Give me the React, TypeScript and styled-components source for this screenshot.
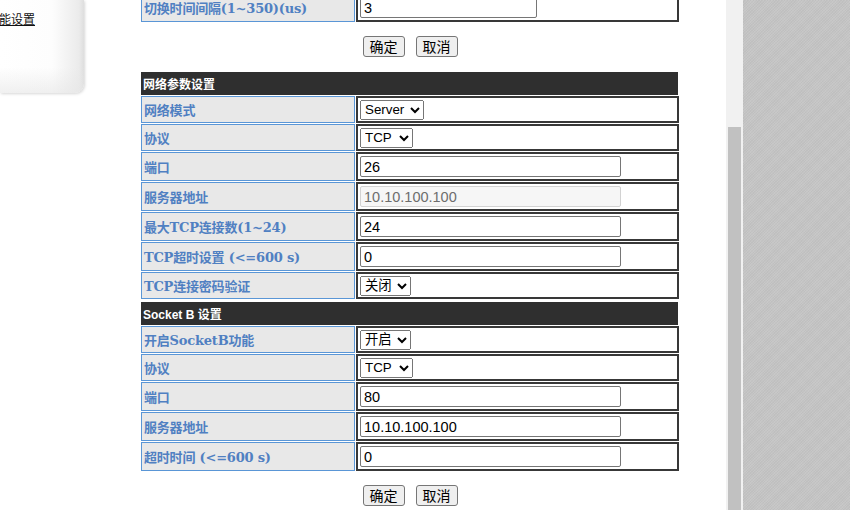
import styled, { createGlobalStyle } from 'styled-components'

type Field = {
  label: string
  kind: 'select' | 'input'
  value: string
  options?: string[]
  width?: number
  disabled?: boolean
}

const switchRow: Field[] = [{ label: '切换时间间隔(1~350)(us)', kind: 'input', value: '3', width: 177 }]

const networkRows: Field[] = [
  { label: '网络模式', kind: 'select', value: 'Server', options: ['Server', 'Client'], width: 64 },
  { label: '协议', kind: 'select', value: 'TCP', options: ['TCP', 'UDP'], width: 53 },
  { label: '端口', kind: 'input', value: '26' },
  { label: '服务器地址', kind: 'input', value: '10.10.100.100', disabled: true },
  { label: '最大TCP连接数(1~24)', kind: 'input', value: '24' },
  { label: 'TCP超时设置 (<=600 s)', kind: 'input', value: '0' },
  { label: 'TCP连接密码验证', kind: 'select', value: '关闭', options: ['关闭', '开启'], width: 51 },
]

const socketBRows: Field[] = [
  { label: '开启SocketB功能', kind: 'select', value: '开启', options: ['开启', '关闭'], width: 51 },
  { label: '协议', kind: 'select', value: 'TCP', options: ['TCP', 'UDP'], width: 53 },
  { label: '端口', kind: 'input', value: '80' },
  { label: '服务器地址', kind: 'input', value: '10.10.100.100' },
  { label: '超时时间 (<=600 s)', kind: 'input', value: '0' },
]

function Rows({ rows }: { rows: Field[] }) {
  return (
    <>
      {rows.map((f, i) => {
        const tall = f.kind === 'input'
        return [
          <Label key={`l${i}`} $tall={tall}>
            {f.label}
          </Label>,
          <Value key={`v${i}`} $tall={tall}>
            {f.kind === 'select' ? (
              <Select defaultValue={f.value} $width={f.width ?? 60}>
                {f.options!.map(o => (
                  <option key={o}>{o}</option>
                ))}
              </Select>
            ) : (
              <TextInput defaultValue={f.value} disabled={f.disabled} $width={f.width ?? 261} />
            )}
          </Value>,
        ]
      })}
    </>
  )
}

function Buttons() {
  return (
    <ButtonBar>
      <Button>确定</Button>
      <Button>取消</Button>
    </ButtonBar>
  )
}

export default function App() {
  return (
    <>
      <GlobalStyle />
      <Shell>
        <Frame>
          <Sidebar>
            <NavLink href="#">能设置</NavLink>
          </Sidebar>
          <Content>
            <Scroller>
              <Section>
                <Rows rows={switchRow} />
              </Section>
              <Buttons />
              <Section>
                <SectionTitle>网络参数设置</SectionTitle>
                <Rows rows={networkRows} />
              </Section>
              <Section $gap>
                <SectionTitle>Socket B 设置</SectionTitle>
                <Rows rows={socketBRows} />
              </Section>
              <Buttons />
            </Scroller>
          </Content>
          <ScrollTrack>
            <ScrollThumb />
          </ScrollTrack>
        </Frame>
        <Backdrop />
      </Shell>
    </>
  )
}

// ----- STYLES -----

const GlobalStyle = createGlobalStyle`
  * { box-sizing: border-box; }
  html, body {
    margin: 0;
    width: 850px;
    height: 510px;
    overflow: hidden;
    background: #fff;
  }
`

const Shell = styled.div`
  display: flex;
  width: 850px;
  height: 510px;
`

const Frame = styled.div`
  display: flex;
  width: 743px;
  height: 100%;
  background: #fff;
  overflow: hidden;
`

const Sidebar = styled.div`
  width: 84px;
  height: 93px;
  flex-shrink: 0;
  padding-top: 10px;
  border-radius: 0 0 9px 0;
  background:
    linear-gradient(to bottom, rgba(255, 255, 255, 0) 72%, rgba(230, 230, 230, 0.6) 100%),
    linear-gradient(to right, #ffffff 0%, #fdfdfd 62%, #ebebeb 94%, #dedede 100%);
  box-shadow: 1px 1px 3px rgba(0, 0, 0, 0.16);
`

const NavLink = styled.a`
  display: inline-block;
  margin-left: -1px;
  font: 12px/16px 'Noto Sans CJK SC', sans-serif;
  color: #111;
  text-decoration: underline;
`

const Content = styled.div`
  flex: 1;
  padding-left: 56px;
  overflow: hidden;
`

const Scroller = styled.div`
  width: 540px;
  margin-top: -8px;
`

const Section = styled.div<{ $gap?: boolean }>`
  display: grid;
  grid-template-columns: 214px 323px;
  gap: 1px;
  padding: 1px;
  margin-top: ${({ $gap }) => ($gap ? '1px' : '0')};
`

const SectionTitle = styled.div`
  grid-column: 1 / -1;
  height: 23px;
  margin-right: 1px;
  padding: 0 2px;
  display: flex;
  align-items: center;
  background: #2f2f2f;
  color: #fff;
  font: bold 12px 'Liberation Sans', 'Noto Sans CJK SC', sans-serif;
`

const Label = styled.div<{ $tall: boolean }>`
  height: ${({ $tall }) => ($tall ? '29px' : '27px')};
  padding: 0 2px;
  display: flex;
  align-items: center;
  background: #e8e8e8;
  border: 1px solid #5a96d6;
  color: #5080c2;
  font: bold 13px 'DejaVu Serif', 'Noto Sans CJK SC', serif;
  letter-spacing: -0.2px;
  white-space: nowrap;
`

const Value = styled.div<{ $tall: boolean }>`
  height: ${({ $tall }) => ($tall ? '29px' : '27px')};
  padding-left: 2px;
  display: flex;
  align-items: center;
  border: 2px solid #383838;
`

const Select = styled.select<{ $width: number }>`
  width: ${({ $width }) => $width}px;
  height: 20px;
  font: 13.33px 'Liberation Sans', 'Noto Sans CJK SC', sans-serif;
  color: #000;
`

const TextInput = styled.input<{ $width: number }>`
  width: ${({ $width }) => $width}px;
  height: 21px;
  padding: 1px 3px;
  border: 1px solid #767676;
  border-radius: 2px;
  font: 14.5px 'Liberation Sans', sans-serif;
  color: #000;

  &:disabled {
    background: #f6f6f6;
    border-color: #d2d2d2;
    color: #6d6d6d;
  }
`

const ButtonBar = styled.div`
  display: flex;
  justify-content: center;
  gap: 11px;
  margin: 13px 0 14px;
`

const Button = styled.button`
  height: 21px;
  padding: 0 6px;
  border: 1px solid #767676;
  border-radius: 3px;
  background: #efefef;
  font: 14px 'Noto Sans CJK SC', sans-serif;
  line-height: 19px;
  color: #000;
`

const ScrollTrack = styled.div`
  width: 17px;
  flex-shrink: 0;
  display: flex;
  flex-direction: column;
  padding: 127px 2px 0;
  background: #f1f1f1;
`

const ScrollThumb = styled.div`
  flex: 1;
  background: #c1c1c1;
`

const Backdrop = styled.div`
  flex: 1;
  background-color: #c5c5c5;
  background-image:
    repeating-linear-gradient(45deg, rgba(255, 255, 255, 0.05) 0 1px, transparent 1px 2px),
    repeating-linear-gradient(-45deg, rgba(0, 0, 0, 0.03) 0 1px, transparent 1px 2px);
`
